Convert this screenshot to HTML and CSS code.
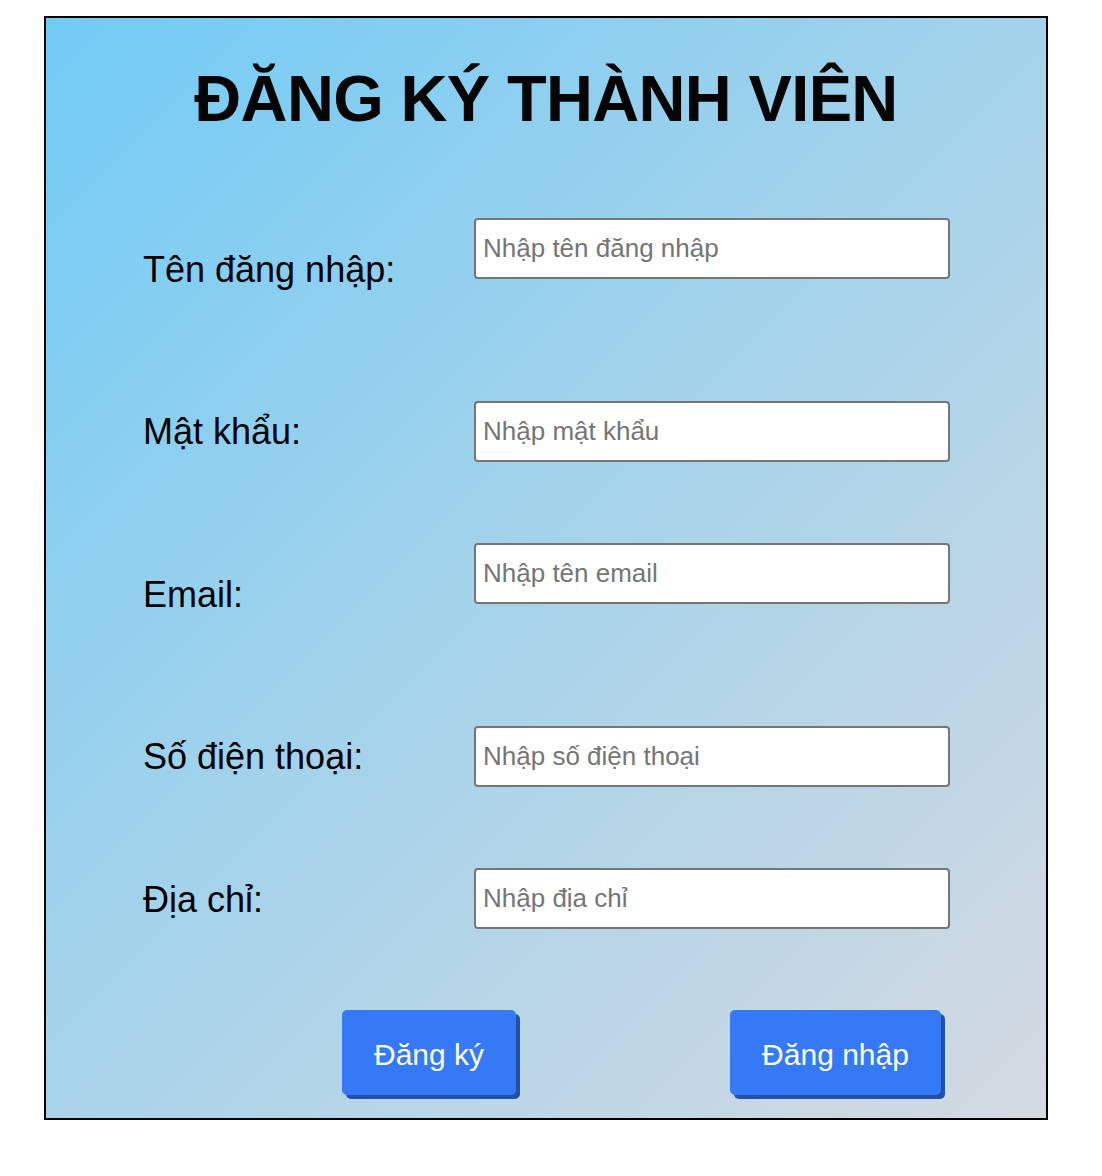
FILE: index.html
```html
<!DOCTYPE html>
<html lang="vi">
<head>
<meta charset="utf-8">
<title>Đăng ký thành viên</title>
<link rel="stylesheet" href="styles.css">
</head>
<body>
<div class="card">
  <h1 class="title">ĐĂNG KÝ THÀNH VIÊN</h1>
  <form class="form">
    <div class="row row--tall">
      <label class="label label--low">Tên đăng nhập:</label>
      <input class="field" type="text" placeholder="Nhập tên đăng nhập">
    </div>
    <div class="row">
      <label class="label">Mật khẩu:</label>
      <input class="field" type="password" placeholder="Nhập mật khẩu">
    </div>
    <div class="row row--tall">
      <label class="label label--low">Email:</label>
      <input class="field" type="text" placeholder="Nhập tên email">
    </div>
    <div class="row">
      <label class="label">Số điện thoại:</label>
      <input class="field" type="text" placeholder="Nhập số điện thoại">
    </div>
    <div class="row">
      <label class="label label--mid">Địa chỉ:</label>
      <input class="field" type="text" placeholder="Nhập địa chỉ">
    </div>
    <div class="actions">
      <button type="button" class="btn btn--register">Đăng ký</button>
      <button type="button" class="btn btn--login">Đăng nhập</button>
    </div>
  </form>
</div>
</body>
</html>
```

FILE: styles.css
```css
html, body {
  margin: 0;
  padding: 0;
  background: #ffffff;
}

body {
  padding: 16px 0 0 44px;
  font-family: "Liberation Sans", Arial, Helvetica, sans-serif;
}

.card {
  box-sizing: border-box;
  width: 1004px;
  height: 1104px;
  border: 2px solid #000;
  background: linear-gradient(135deg, #71cbf6 0%, #a6d3ea 50%, #d4d9e1 100%);
}

.title {
  margin: 0;
  padding-top: 43px;
  height: 157px;
  box-sizing: content-box;
  text-align: center;
  font-size: 65px;
  line-height: 75px;
  font-weight: 700;
  color: #050505;
  letter-spacing: -0.65px;
}

.form {
  display: flex;
  flex-direction: column;
  padding-left: 97px;
}

.row {
  display: grid;
  grid-template-columns: 331px 476px;
  align-items: start;
  height: 142px;
}

.row--tall {
  height: 183px;
}

.label {
  font-size: 36px;
  line-height: 40px;
  color: #000;
  margin-top: 11px;
}

.label--low {
  margin-top: 32px;
}

.label--mid {
  margin-top: 12px;
}

.field {
  box-sizing: border-box;
  width: 476px;
  height: 61px;
  margin: 0;
  padding: 0 7px;
  border: 2px solid #767676;
  border-radius: 4px;
  background: #fff;
  font-family: "Liberation Sans", Arial, Helvetica, sans-serif;
  font-size: 26px;
  color: #000;
}

.field::placeholder {
  color: #757575;
}

.actions {
  display: flex;
  align-items: flex-start;
  padding-left: 199px;
  gap: 214px;
}

.btn {
  box-sizing: border-box;
  height: 85px;
  border: none;
  border-radius: 5px;
  background: #3579f6;
  box-shadow: 4px 4px 0 #2451a6;
  color: #fff;
  font-family: "Liberation Sans", Arial, Helvetica, sans-serif;
  font-size: 30px;
  padding: 4px 0 0;
  cursor: pointer;
}

.btn--register {
  width: 174px;
}

.btn--login {
  width: 211px;
}
```
